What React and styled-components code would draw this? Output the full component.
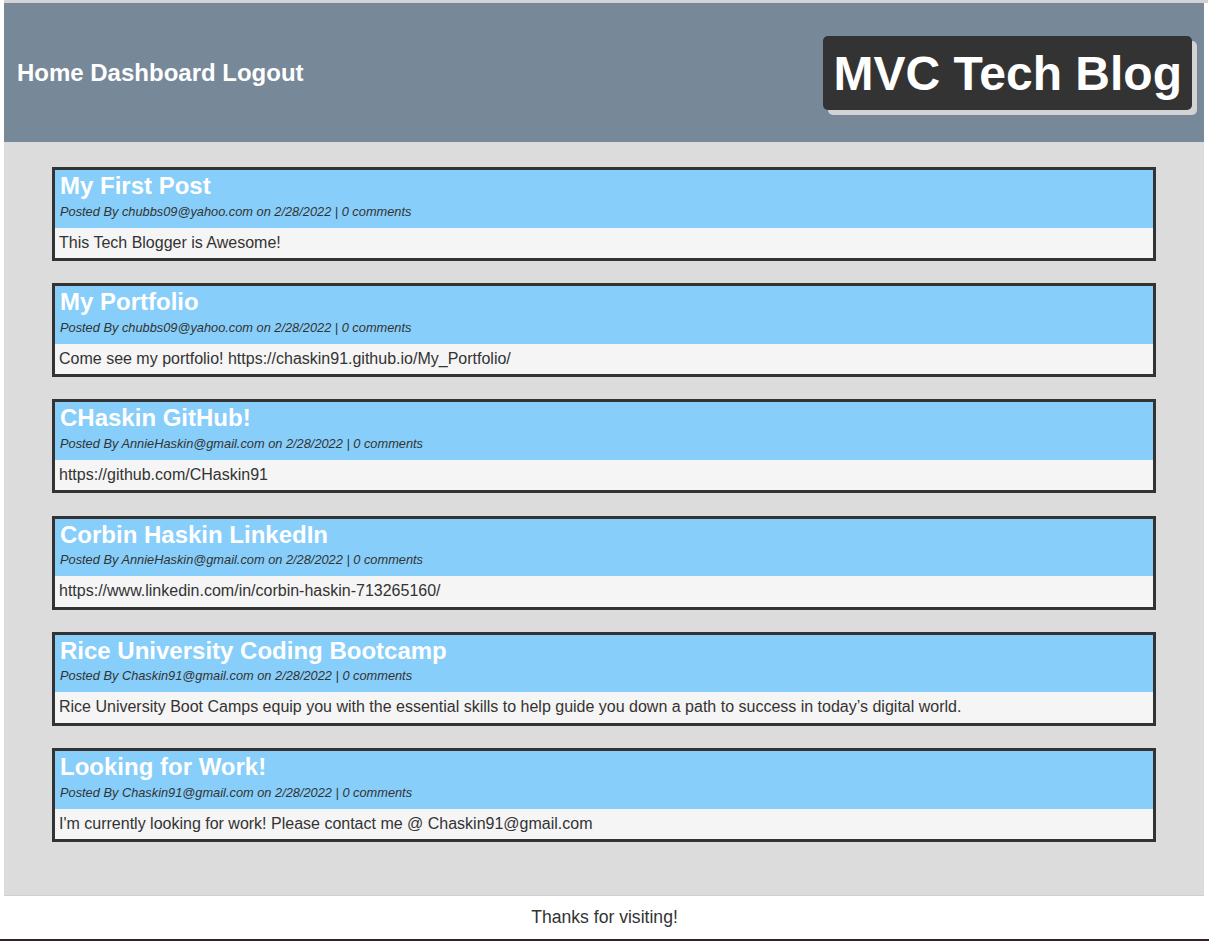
import React from "react";
import styled, { createGlobalStyle } from "styled-components";

const GlobalStyle = createGlobalStyle`
	html, body {
		margin: 0;
		padding: 0;
		background: #ffffff;
		font-family: "Liberation Sans", Arial, sans-serif;
		color: #333333;
	}
`;

const TopRule = styled.div`
	height: 3px;
	margin: 0 1px 0 4px;
	background: #d3d3d3;
`;

const Wrapper = styled.div`
	margin: 0 5px 0 4px;
`;

const Header = styled.header`
	background: #778899;
	height: 139px;
	display: flex;
	align-items: center;
	justify-content: space-between;
	padding: 0 12px 0 13px;
	box-sizing: border-box;
`;

const Nav = styled.nav`
	display: flex;
	gap: 6.6px;
`;

const NavLink = styled.a`
	color: #ffffff;
	font-size: 24px;
	font-weight: bold;
	text-decoration: none;
	cursor: pointer;
`;

const Brand = styled.h1`
	margin: 0;
	background: #333333;
	color: #ffffff;
	font-size: 48px;
	font-weight: bold;
	padding: 10px 10px 9px 11px;
	border-radius: 5px;
	box-shadow: 5px 5px 0 #d3d3d3;
	line-height: 55px;
`;

const Main = styled.main`
	background: #dcdcdc;
	padding: 25px 48px 53px;
	display: flex;
	flex-direction: column;
	gap: 22.2px;
	border-bottom: 1px solid #cfcfcf;
`;

const Post = styled.article`
	border: 3px solid #333333;
	background: #f5f5f5;
`;

const PostHead = styled.div`
	background: #87cefa;
	padding: 2px 5px 9px;
`;

const PostTitle = styled.h2`
	margin: 0;
	color: #ffffff;
	font-size: 24px;
	font-weight: bold;
	line-height: 27.6px;
`;

const Meta = styled.p`
	margin: 4px 0 0;
	font-size: 12.8px;
	font-style: italic;
	color: #333333;
	line-height: 15px;
`;

const PostBody = styled.p`
	margin: 0;
	padding: 6px 4px 6px;
	font-size: 16px;
	line-height: 18.4px;
	color: #333333;
`;

const Footer = styled.footer`
	text-align: center;
	font-size: 17.6px;
	line-height: 20px;
	padding: 11px 0 12px;
	color: #333333;
	border-bottom: 2px solid #3b1f2c;
`;

const posts = [
	{
		title: "My First Post",
		author: "chubbs09@yahoo.com",
		body: "This Tech Blogger is Awesome!",
	},
	{
		title: "My Portfolio",
		author: "chubbs09@yahoo.com",
		body: "Come see my portfolio! https://chaskin91.github.io/My_Portfolio/",
	},
	{
		title: "CHaskin GitHub!",
		author: "AnnieHaskin@gmail.com",
		body: "https://github.com/CHaskin91",
	},
	{
		title: "Corbin Haskin LinkedIn",
		author: "AnnieHaskin@gmail.com",
		body: "https://www.linkedin.com/in/corbin-haskin-713265160/",
	},
	{
		title: "Rice University Coding Bootcamp",
		author: "Chaskin91@gmail.com",
		body: "Rice University Boot Camps equip you with the essential skills to help guide you down a path to success in today’s digital world.",
	},
	{
		title: "Looking for Work!",
		author: "Chaskin91@gmail.com",
		body: "I'm currently looking for work! Please contact me @ Chaskin91@gmail.com",
	},
];

const App = () => {
	return (
		<>
			<GlobalStyle />
			<TopRule />
			<Wrapper>
				<Header>
					<Nav>
						<NavLink>Home</NavLink>
						<NavLink>Dashboard</NavLink>
						<NavLink>Logout</NavLink>
					</Nav>
					<Brand>MVC Tech Blog</Brand>
				</Header>
				<Main>
					{posts.map((post) => (
						<Post key={post.title}>
							<PostHead>
								<PostTitle>{post.title}</PostTitle>
								<Meta>
									Posted By {post.author} on 2/28/2022 | 0 comments
								</Meta>
							</PostHead>
							<PostBody>{post.body}</PostBody>
						</Post>
					))}
				</Main>
			</Wrapper>
			<Footer>Thanks for visiting!</Footer>
		</>
	);
};

export default App;
